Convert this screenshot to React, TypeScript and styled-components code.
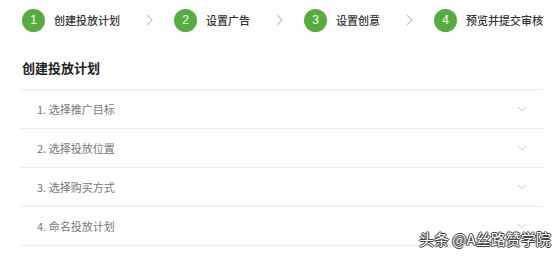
import React from 'react'
import styled, { createGlobalStyle } from 'styled-components'

const GlobalStyle = createGlobalStyle`
  html, body {
    margin: 0;
    padding: 0;
    background: #fff;
    font-family: "Noto Sans CJK SC", "Noto Sans", sans-serif;
  }
`

const steps = ['创建投放计划', '设置广告', '设置创意', '预览并提交审核']
const sections = ['1. 选择推广目标', '2. 选择投放位置', '3. 选择购买方式', '4. 命名投放计划']

const App = () => {
  return (
    <Page>
      <GlobalStyle />
      <Steps>
        {steps.map((label, i) => (
          <React.Fragment key={label}>
            <Step>
              <Circle>{i + 1}</Circle>
              <StepLabel>{label}</StepLabel>
            </Step>
            {i < steps.length - 1 && (
              <Sep>
                <svg width="7" height="12" viewBox="0 0 7 12">
                  <path d="M1 1 L6 6 L1 11" fill="none" stroke="#c8c8c8" strokeWidth="1.2" />
                </svg>
              </Sep>
            )}
          </React.Fragment>
        ))}
      </Steps>
      <Heading>创建投放计划</Heading>
      <List>
        {sections.map((s) => (
          <Row key={s}>
            <RowText>{s}</RowText>
            <svg width="10" height="6" viewBox="0 0 10 6">
              <path d="M1 1 L5 5 L9 1" fill="none" stroke="#cfcfcf" strokeWidth="1" />
            </svg>
          </Row>
        ))}
      </List>
      <Watermark>头条 @A丝路赞学院</Watermark>
    </Page>
  )
}

const Page = styled.div`
  position: relative;
  width: 553px;
  height: 256px;
  overflow: hidden;
  background: #fff;
`

const Steps = styled.div`
  display: flex;
  align-items: center;
  height: 40px;
  padding-left: 22px;
`

const Step = styled.div`
  display: flex;
  align-items: center;
  gap: 9px;
`

const Circle = styled.div`
  width: 23px;
  height: 23px;
  border-radius: 50%;
  background: #56ad3f;
  color: #fff;
  font-family: "Liberation Sans", Arial, sans-serif;
  font-size: 12px;
  display: flex;
  align-items: center;
  justify-content: center;
`

const StepLabel = styled.span`
  font-size: 11px;
  color: #333;
  font-weight: 500;
`

const Sep = styled.div`
  display: flex;
  align-items: center;
  margin: 0 21px 0 26px;
`

const Heading = styled.div`
  margin: 18px 0 0 22px;
  font-size: 13px;
  line-height: 20px;
  font-weight: 700;
  color: #222;
`

const List = styled.div`
  margin: 11px 0 0 20px;
  width: 523px;
  border-top: 1px solid #ebebeb;
`

const Row = styled.div`
  display: flex;
  align-items: center;
  justify-content: space-between;
  height: 38px;
  padding: 0 16px 0 17px;
  border-bottom: 1px solid #ebebeb;
`

const RowText = styled.span`
  font-size: 11px;
  color: #777;
`

const Watermark = styled.div`
  position: absolute;
  left: 419px;
  top: 229px;
  font-size: 15px;
  line-height: 20px;
  color: #fff;
  text-shadow: -1px 0 #444, 1px 0 #444, 0 -1px #444, 0 1px #444, 0 0 2px #222;
  white-space: nowrap;
`

export default App
